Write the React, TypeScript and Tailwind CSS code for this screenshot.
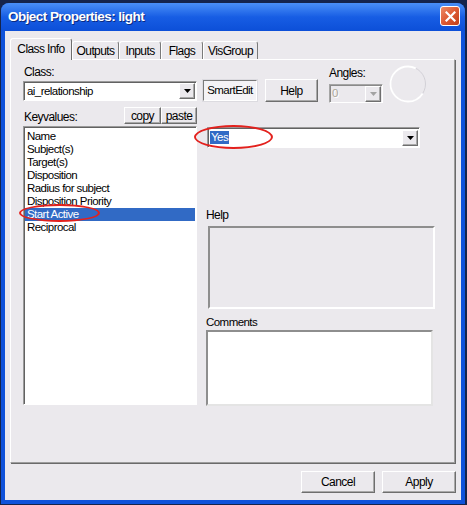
import React from "react";

const raised =
  "border border-t-white border-l-white border-r-[#6e6e6e] border-b-[#6e6e6e] shadow-[inset_-1px_-1px_0_#a9a9a9] bg-[#ebe9ed]";
const sunken =
  "border border-t-[#9a9a9a] border-l-[#9a9a9a] border-r-white border-b-white shadow-[inset_1px_1px_0_#626262]";

function Arrow({ color = "#000" }: { color?: string }) {
  return (
    <svg width="7" height="4" viewBox="0 0 7 4">
      <polygon points="0,0 7,0 3.5,4" fill={color} />
    </svg>
  );
}

function DropBtn({ disabled = false }: { disabled?: boolean }) {
  return (
    <div className={`${raised} w-[16px] h-[16px] mr-[1px] flex items-center justify-center shrink-0`}>
      <Arrow color={disabled ? "#a3a3a3" : "#000"} />
    </div>
  );
}

function CloseBtn() {
  return (
    <div className="mt-[3px] w-[20px] h-[20px] rounded-[3px] border border-white bg-gradient-to-br from-[#ec8a66] via-[#dd5a33] to-[#c23e17] flex items-center justify-center">
      <svg width="11" height="11" viewBox="0 0 11 11">
        <path d="M1.5 1.5 L9.5 9.5 M9.5 1.5 L1.5 9.5" stroke="#fff" strokeWidth="2.2" strokeLinecap="square" />
      </svg>
    </div>
  );
}

const items = [
  "Name",
  "Subject(s)",
  "Target(s)",
  "Disposition",
  "Radius for subject",
  "Disposition Priority",
  "Start Active",
  "Reciprocal",
];

const tab =
  "h-[18px] border-l border-t border-r border-l-white border-t-white border-r-[#7a7a7a] rounded-t-[3px] flex items-center justify-center text-[12px] tracking-[-0.6px]";

export default function App() {
  return (
    <div className="relative w-[467px] h-[505px] overflow-hidden bg-[#15244c] font-['Liberation_Sans',Arial,sans-serif] text-[11.5px] tracking-[-0.55px] text-black">
      <div className="ml-[1px] mt-[3px] w-[464px] h-[501px] flex flex-col rounded-t-[8px] bg-[#0f52da] overflow-hidden">
        <div className="h-[28px] shrink-0 flex items-start justify-between pl-[7px] pr-[5px] bg-gradient-to-b from-[#4a8ff7] via-[#175de4] to-[#0c4fd8]">
          <span className="mt-[6px] text-white font-bold text-[13.5px] leading-[16px] tracking-[-0.55px] [text-shadow:1px_1px_0_#0a2a80]">
            Object Properties: light
          </span>
          <CloseBtn />
        </div>
        <div className="flex-1 px-[4px] pb-[4px]">
          <div className="h-full bg-[#ebe9ed] flex flex-col px-[5px] pt-[7px]">
            {/* tabs */}
            <div className="flex items-end h-[21px]">
              <div className="relative z-10 -mb-[1px] w-[62px] h-[22px] bg-[#ebe9ed] border-l border-t border-r border-l-white border-t-white border-r-[#6e6e6e] rounded-t-[3px] flex items-center justify-center pb-[1px] text-[12px] tracking-[-0.6px]">
                Class Info
              </div>
              <div className={`${tab} w-[47px]`}>Outputs</div>
              <div className={`${tab} w-[42px]`}>Inputs</div>
              <div className={`${tab} w-[42px]`}>Flags</div>
              <div className={`${tab} w-[55px]`}>VisGroup</div>
            </div>
            {/* panel */}
            <div className="w-[445px] h-[404px] border border-t-white border-l-white border-r-[#9d9d9d] border-b-[#9d9d9d] shadow-[1px_1px_0_#6a6a6a] pl-[12px] pt-[6px] flex flex-col">
              {/* row 1 */}
              <div className="flex items-start h-[41px]">
                <div className="w-[174px] flex flex-col">
                  <div className="h-[15px] pl-[1px] leading-[13px] text-[12px]">Class:</div>
                  <div className={`${sunken} h-[20px] bg-white flex items-center justify-between`}>
                    <span className="pl-[3px] leading-[13px]">ai_relationship</span>
                    <DropBtn />
                  </div>
                </div>
                <div className="ml-[6px] mt-[14px] w-[54px] h-[21px] border border-t-[#7a7a7a] border-l-[#7a7a7a] border-r-white border-b-white bg-[#f4f3f6] shadow-[0_0_0_1px_#dcdbe0] flex items-center justify-center">
                  SmartEdit
                </div>
                <div className={`${raised} ml-[8px] mt-[13px] w-[53px] h-[23px] flex items-center justify-center text-[12px]`}>
                  Help
                </div>
                <div className="ml-[11px] w-[54px] flex flex-col">
                  <div className="h-[18px] pt-[1px] leading-[13px] text-[12px]">Angles:</div>
                  <div className="h-[19px] border border-t-[#a5a5a5] border-l-[#a5a5a5] border-r-white border-b-white shadow-[inset_1px_1px_0_#8a8a8a] bg-[#ebe9ed] flex items-center justify-between">
                    <span className="pl-[2px] text-[#aca899] [text-shadow:1px_1px_0_#fff]">0</span>
                    <DropBtn disabled />
                  </div>
                </div>
                <div className="ml-[6px] -mt-[1px]">
                  <svg width="38" height="38" viewBox="0 0 38 38">
                    <circle cx="19" cy="19" r="17.5" fill="none" stroke="#d2d0d6" strokeWidth="1" />
                    <circle cx="19" cy="19" r="17.5" fill="none" stroke="#ffffff" strokeWidth="1.8" strokeDasharray="80 40" strokeDashoffset="-10" />
                  </svg>
                </div>
              </div>
              {/* row 2 */}
              <div className="flex items-start">
                <div className="w-[174px] flex flex-col">
                  <div className="h-[19px] flex items-start">
                    <div className="w-[101px] pl-[1px] pt-[4px] leading-[13px] text-[12px]">Keyvalues:</div>
                    <div className={`${raised} w-[37px] h-[17px] flex items-center justify-center text-[12px]`}>copy</div>
                    <div className={`${raised} w-[36px] h-[17px] flex items-center justify-center text-[12px]`}>paste</div>
                  </div>
                  <div className={`${sunken} h-[279px] bg-white pt-[3px] px-[1px]`}>
                    {items.map((it) => (
                      <div
                        key={it}
                        className={`h-[13px] leading-[13px] pl-[2px] whitespace-nowrap ${
                          it === "Start Active" ? "bg-[#316ac5] text-white" : ""
                        }`}
                      >
                        {it}
                      </div>
                    ))}
                  </div>
                </div>
                <div className="ml-[9px] w-[230px] flex flex-col">
                  <div className={`${sunken} ml-[1px] mt-[20px] w-[213px] h-[21px] bg-white flex items-center justify-between`}>
                    <span className="ml-[2px] px-[1px] bg-[#316ac5] text-white leading-[13px]">Yes</span>
                    <DropBtn />
                  </div>
                  <div className="mt-[61px] h-[13px] leading-[13px] text-[12px]">Help</div>
                  <div className="ml-[2px] mt-[4px] w-[227px] h-[83px] border-2 border-t-[#8e8e8e] border-l-[#8e8e8e] border-r-white border-b-white bg-[#ebe9ed]" />
                  <div className="mt-[7px] h-[13px] leading-[13px]">Comments</div>
                  <div className="mt-[1px] w-[227px] h-[76px] border-2 border-t-[#8e8e8e] border-l-[#8e8e8e] border-r-[#e4e4e4] border-b-[#e4e4e4] bg-white" />
                </div>
              </div>
            </div>
            {/* bottom buttons */}
            <div className="flex justify-end gap-[7px] mt-[8px]">
              <div className={`${raised} w-[74px] h-[22px] flex items-center justify-center text-[12px]`}>Cancel</div>
              <div className={`${raised} w-[74px] h-[22px] flex items-center justify-center text-[12px]`}>Apply</div>
            </div>
          </div>
        </div>
      </div>
      {/* red annotation ellipses */}
      <div className="absolute left-[194px] top-[125px] w-[79px] h-[24px] rounded-[50%] border-2 border-[#e3211d]" />
      <div className="absolute left-[19px] top-[204px] w-[81px] h-[18px] rounded-[50%] border-2 border-[#e3211d]" />
    </div>
  );
}
